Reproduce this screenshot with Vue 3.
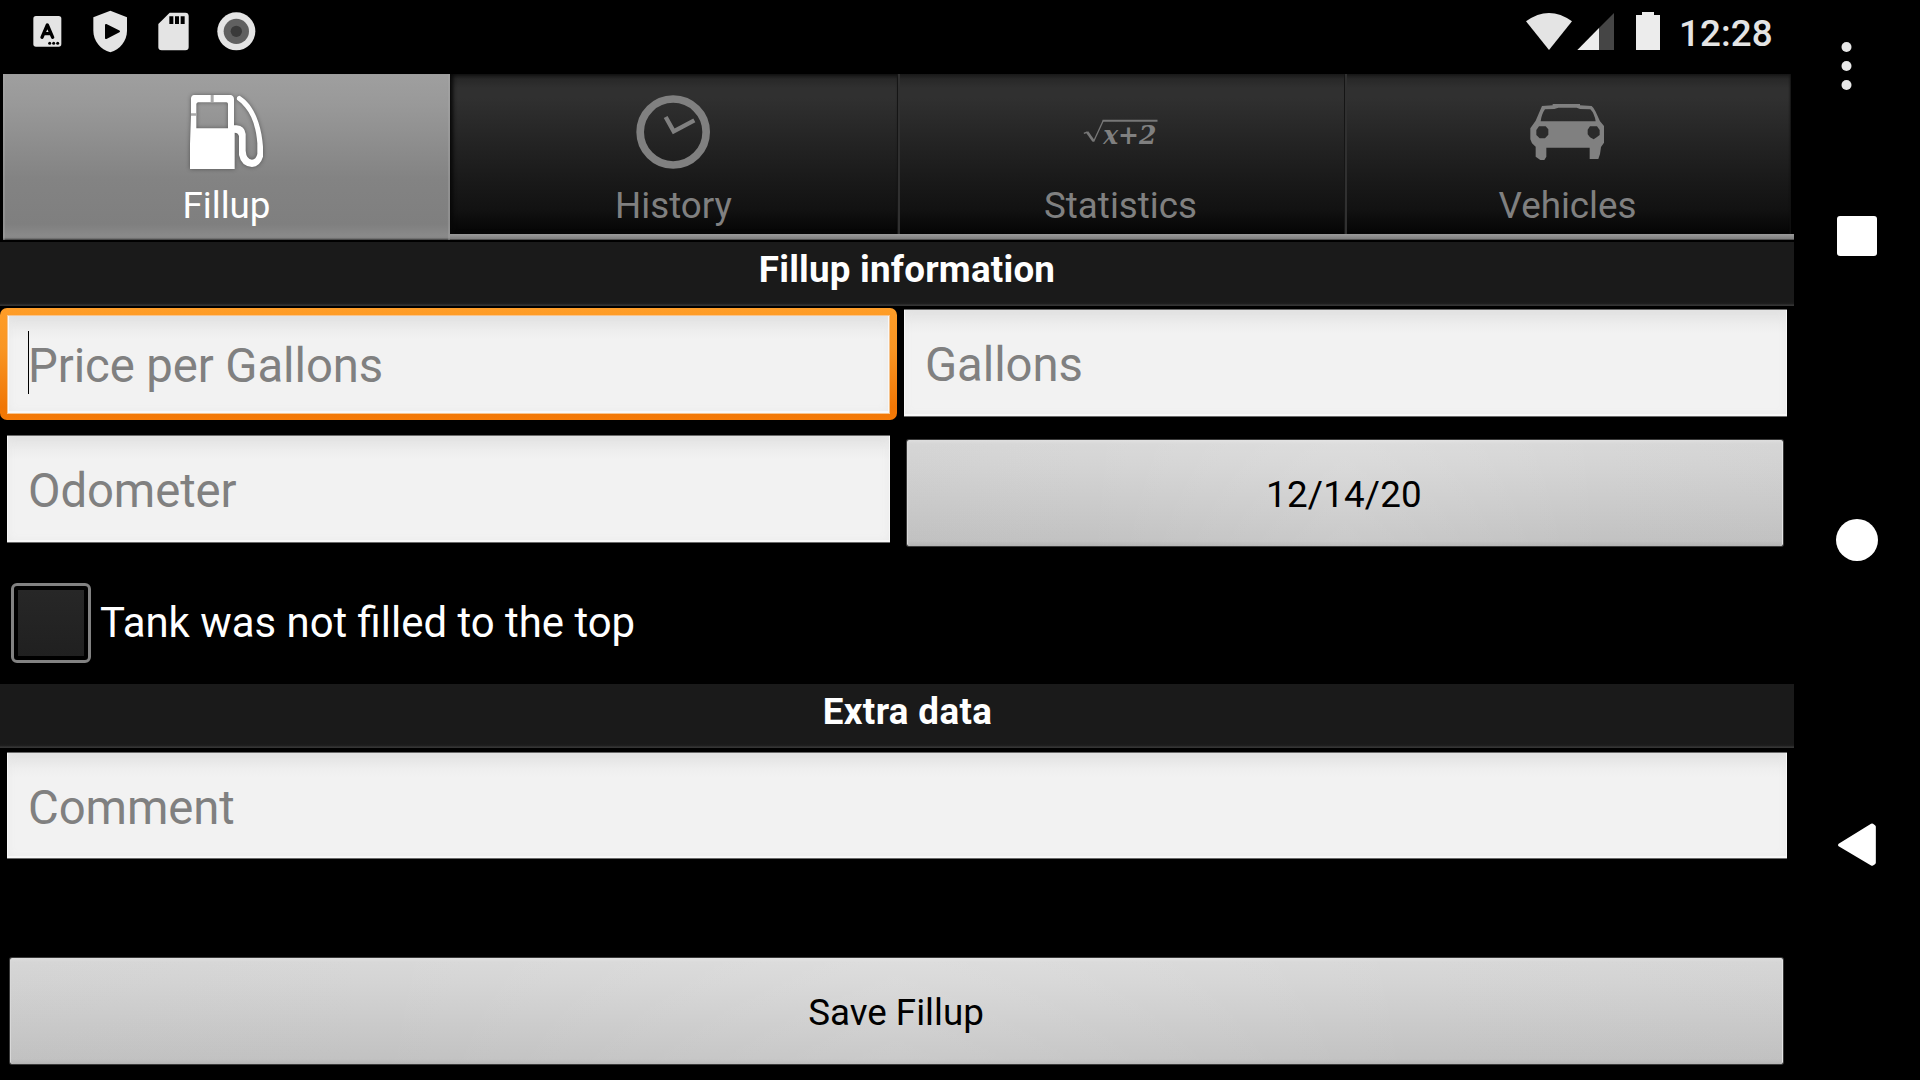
<script setup>
import { ref } from 'vue'

const tabs = ['Fillup', 'History', 'Statistics', 'Vehicles']
const active = ref('Fillup')
const price = ref('')
const gallons = ref('')
const odometer = ref('')
const comment = ref('')
</script>

<template>
  <div class="device">
    <div class="screen">
      <header class="status">
        <div class="notifications">
          <svg viewBox="48 0 189 189">
            <rect x="100" y="48" width="84" height="92" rx="8" fill="#e4e4e4" />
            <path d="M126 112 L142 75 L158 112 M132 101 H152" fill="none" stroke="#000" stroke-width="10" stroke-linecap="round" stroke-linejoin="round" />
            <circle cx="149" cy="130" r="4.5" /><circle cx="161" cy="130" r="4.5" /><circle cx="173" cy="130" r="4.5" />
          </svg>
          <svg viewBox="237 0 189 189">
            <path d="M331 32 L381 52 V92 C381 122 360 148 331 157 C301 148 280 122 280 92 V52 Z" fill="#e4e4e4" />
            <path d="M318 75 L357 94 L318 114 Z" stroke="#000" stroke-width="6" stroke-linejoin="round" />
          </svg>
          <svg viewBox="426 0 189 189">
            <path d="M509 38 H556 Q566 38 566 48 V141 Q566 151 556 151 H485 Q475 151 475 141 V72 Z" fill="#e4e4e4" />
            <path d="M508 49 h12 v23 h-12z M525 49 h12 v23 h-12z M542 49 h12 v23 h-12z" />
          </svg>
          <svg viewBox="615 0 189 189">
            <circle cx="709" cy="94" r="57" fill="#e4e4e4" />
            <circle cx="709" cy="94" r="38" fill="#606060" />
            <circle cx="709" cy="94" r="17" fill="#3a3a3a" />
          </svg>
        </div>
        <div class="system">
          <svg class="signals" viewBox="240 0 450 189">
            <path d="M258 64 Q327 14 396 64 L327 150 Z" fill="#e4e4e4" />
            <path d="M522 39 V150 H477 V84 Z" fill="#454545" />
            <path d="M412 150 L477 84 V150 Z" fill="#ececec" />
            <path d="M606 36 H642 V45 H660 V150 H588 V45 H606 Z" fill="#ececec" />
          </svg>
          <span class="clock">12:28</span>
        </div>
      </header>

      <nav class="tabs">
        <button v-for="t in tabs" :key="t" class="tab" :class="{ selected: t === active }" @click="active = t">
          <svg v-if="t === 'Fillup'" class="pump" viewBox="555 270 252 252" fill="#fff">
            <path fill-rule="evenodd" d="M582 285 H691 Q701 286 702 297 V376 H710 Q734 378 737 402 V452 Q739 478 756 479 Q768 479 772 462 V430 C768 370 748 325 711 299 Q708 288 719 287 C765 315 785 380 789 440 V470 Q780 500 756 501 Q724 499 717 465 V408 Q714 398 704 398 V507 H570 V432 L573 348 V295 Q574 286 582 285 Z M594 307 Q589 308 589 313 V385 H684 V312 Q684 307 679 307 Z" />
            <path d="M632 285h9v21h-9z M573 340h16v7h-16z" fill="#a9a9a9" />
          </svg>
          <svg v-else-if="t === 'History'" viewBox="576 90 252 252" fill="none" stroke="#808080">
            <circle cx="699.5" cy="216" r="99" stroke-width="23" />
            <path d="M677 171 L701 214 L763 181" stroke-width="13" />
          </svg>
          <svg v-else-if="t === 'Statistics'" viewBox="175.5 90 252 252" fill="none" stroke="#777">
            <path d="M190 220 L201 216" stroke-width="4" />
            <path d="M200 216 L219 243" stroke-width="8" />
            <path d="M219 245 L248 182" stroke-width="4" />
            <path d="M246 182 H411" stroke-width="6" />
            <text x="248" y="253" textLength="160" lengthAdjust="spacingAndGlyphs" class="formula">x+2</text>
          </svg>
          <svg v-else viewBox="258 270 252 252" fill="#808080">
            <path fill-rule="evenodd" d="M306 318 L338 316 V312 H420 V316 L455 318 Q462 324 467 335 L480 364 L492 378 V428 L483 441 L480 462 L475 477 H449 V443 H319 V470 L313 480 H301 L287 470 V440 L276 430 L271 418 V385 L287 362 Z M315 328 Q305 342 302 364 H467 Q463 340 451 328 L420 327 L410 323 H355 L343 327 Z" />
            <path d="M297 379 H317 L325 388 V404 L315 415 H299 L289 405 V390 Z M450 379 H471 L479 390 V405 L470 412 L461 418 L450 412 L443 403 V389 Z" fill="#2a2a2a" />
          </svg>
          <span>{{ t }}</span>
        </button>
      </nav>

      <main class="form">
        <h2 class="section">Fillup information</h2>
        <div class="row first">
          <label class="field focused"><input v-model="price" placeholder="Price per Gallons" /><i class="caret"></i></label>
          <label class="field"><input v-model="gallons" placeholder="Gallons" /></label>
        </div>
        <div class="row second">
          <label class="field"><input v-model="odometer" placeholder="Odometer" /></label>
          <button class="push date">12/14/20</button>
        </div>
        <div class="check">
          <span class="box"></span>
          <span class="check-text">Tank was not filled to the top</span>
        </div>
        <h2 class="section extra">Extra data</h2>
        <div class="row third">
          <label class="field"><input v-model="comment" placeholder="Comment" /></label>
        </div>
        <button class="push save">Save Fillup</button>
      </main>
    </div>

    <aside class="softkeys">
      <svg class="more" viewBox="-0.5 0 12 50"><circle cx="6" cy="6" r="5" /><circle cx="6" cy="25" r="5" /><circle cx="6" cy="44" r="5" /></svg>
      <span class="recents"></span>
      <span class="home"></span>
      <svg class="back" viewBox="714 307 114 129"><path d="M720 373 L816 314 L822 318 V426 L816 430 Z" fill="#fff" stroke="#fff" stroke-width="11" stroke-linejoin="round" /></svg>
    </aside>
  </div>
</template>

<style>
body { background: #000; overflow: hidden; }
</style>

<style scoped>
.device {
  display: flex;
  width: 1920px;
  height: 1080px;
  background: #000;
  color: #fff;
  font-family: Roboto, "Noto Sans", sans-serif;
  font-size: 36.75px;
  overflow: hidden;
}
.device * { box-sizing: border-box; }
svg { display: block; flex: none; }
button { font: inherit; border: 0; padding: 0; border-radius: 0; }
.screen { width: 1794px; flex: none; }

.status { display: flex; justify-content: space-between; height: 74px; padding-left: 16px; }
.notifications { display: flex; }
.notifications svg { width: 63px; height: 63px; }
.system { display: flex; width: 274px; }
.signals { width: 150px; height: 63px; }
.clock { margin-left: 9px; font-weight: 500; color: #e4e4e4; line-height: 67px; letter-spacing: 0.1px; }

.tabs {
  display: flex;
  height: 168px;
  padding: 0 3px;
  background: linear-gradient(#000, #000) 0 166px / 100% 2px no-repeat,
    linear-gradient(#9a9a9a, #808080 80%, #333) 449px 160px / 1345px 6px no-repeat;
}
.tab {
  display: flex;
  flex-direction: column;
  align-items: center;
  width: 447px;
  height: 160px;
  padding-top: 16px;
  color: #808080;
  background: linear-gradient(#181818, #282828 5px, #303030 14px, #303030 24px, #1b1b1b 100px, #121212 135px, #070707 155px, #030303);
  box-shadow: inset 1px 0 #151515, inset 3px 0 #303030;
}
.tab:last-child { box-shadow: inset 1px 0 #151515, inset 3px 0 #303030, inset -1px 0 2px #111; }
.tab.selected + .tab { box-shadow: inset 3px 0 4px #080808; }
.tab.selected {
  height: 166px;
  color: #fff;
  background: linear-gradient(#9f9f9f, #999 30px, #838383 105px, #7f7f7f 150px, #8a8a8a 162px, #858585 164px, #333);
  box-shadow: inset 2px 0 1px #aaa6, inset -2px 0 1px #aaa6;
}
.tab svg { width: 84px; height: 84px; }
.tab span { margin-top: 10px; line-height: 43px; }
.pump { filter: drop-shadow(0 0 2px #0006); }
.formula { font: italic bold 78px "DejaVu Serif", serif; fill: #808080; stroke: none; }

.form { display: flex; flex-direction: column; }
.section {
  margin: 0;
  height: 64px;
  flex: none;
  background: linear-gradient(#1a1a1a 60px, #1f1f1f 62px, #383838 63px, #303030);
  font-size: 36.75px;
  font-weight: 700;
  line-height: 55px;
  letter-spacing: 0.22px;
  text-align: center;
  text-indent: 20px;
}
.section.extra { letter-spacing: 0.35px; text-indent: 21px; }
.row { display: flex; }
.first { padding: 3px 0 0 7px; gap: 14px; }
.second { padding: 18px 0 0 7px; gap: 17px; }
.third { padding: 4px 0 0 7px; }
.field { position: relative; width: 883px; height: 108px; flex: none; }
.third .field { width: 1780px; height: 107px; }
.field input {
  display: block;
  width: 100%;
  height: 100%;
  margin: 0;
  padding: 4px 21px 0;
  border: solid #6a6a6a;
  border-width: 1px 0;
  border-radius: 0;
  outline: 0;
  background: linear-gradient(#dedede, #e6e6e6 6px, #eee 15px, #f2f2f2 24px);
  box-shadow: inset 1px 0 #f8f8f8, inset -1px 0 #f8f8f8, inset 0 -2px #f8f8f8, inset 0 0 10px #e8e8e8;
  font: 47.25px Roboto, "Noto Sans", sans-serif;
  letter-spacing: -0.08px;
  color: #000;
}
.field input::placeholder { color: #808080; opacity: 1; }
.focused::before {
  content: "";
  position: absolute;
  inset: -1px -7px -3px;
  border-radius: 7px;
  background: linear-gradient(#ff9d27, #f99624 40px, #f07605 100px, #f57a06);
}
.focused input {
  position: relative;
  height: 99px;
  margin-top: 6px;
  padding-top: 2px;
  border: 1px solid #f7c48e;
  padding-left: 20px;
}
.caret { position: absolute; left: 21px; top: 22px; width: 1px; height: 63px; background: #000; }

.push {
  color: #000;
  border-radius: 2px;
  background: linear-gradient(90deg, #b8b8b811, #fff0 20%, #fff2 50%, #fff0 80%, #b8b8b811),
    linear-gradient(#e0e0e0, #d8d8d8 4px, #d4d4d4 25px, #c4c4c4 92px, #c2c2c2 101px, #b4b4b4);
  box-shadow: 0 0 0 1px #3a3a3a, inset -1px 0 #e4e4e4, inset 1px 0 #d8d8d8;
}
.date { width: 876px; height: 106px; margin-top: 5px; padding-right: 2px; line-height: 110px; letter-spacing: 0.2px; }
.check { display: flex; height: 138px; padding: 37px 0 0 11px; }
.box {
  width: 80px;
  height: 80px;
  flex: none;
  border: 3px solid #828282;
  border-radius: 6px;
  background: linear-gradient(#272727, #202020) 4px 4px / 66px 66px no-repeat, #000;
}
.check-text { margin-left: 9px; font-size: 41.9px; line-height: 80px; }
.save { width: 1773px; height: 106px; margin: 99px 0 0 10px; padding-right: 1px; line-height: 110px; }

.softkeys { display: flex; flex-direction: column; width: 126px; padding-top: 41px; }
.more { width: 12px; height: 50px; margin-left: 46px; fill: #e8e8e8; }
.recents { width: 40px; height: 40px; margin: 125px 0 0 43px; background: #fff; border-radius: 3px; }
.home { width: 42px; height: 42px; margin: 263px 0 0 42px; background: #fff; border-radius: 50%; }
.back { width: 38px; height: 43px; margin: 262px 0 0 44px; }
</style>
